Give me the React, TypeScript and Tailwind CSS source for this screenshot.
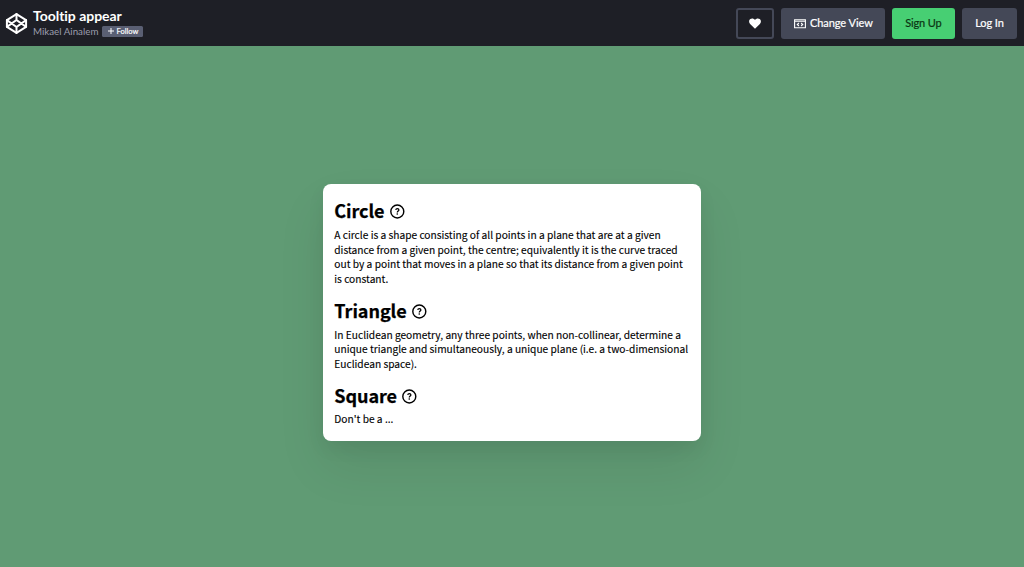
import type { ReactNode } from "react";

function Logo() {
  return (
    <svg className="h-[23px] w-[23px] shrink-0" viewBox="0 0 24 24" fill="none" stroke="#fff" strokeWidth="2.1" strokeLinejoin="round" strokeLinecap="round">
      <path d="M12 2.2 22 8.5v7L12 21.8 2 15.5v-7Z" />
      <path d="M12 2.2v6.2M12 15.6v6.2M2 8.5l10 7.1 10-7.1M2 15.5l10-7.1 10 7.1" />
    </svg>
  );
}

function HelpIcon() {
  return (
    <svg className="mt-[2.5px] h-[15px] w-[15px]" viewBox="0 0 15 15" fill="none" stroke="#000">
      <circle cx="7.3" cy="7.5" r="6.5" strokeWidth="1.4" />
      <path d="M5.7 5.9C5.9 5 6.5 4.6 7.3 4.6c1 0 1.6.5 1.6 1.3 0 1.1-1.6 1.2-1.6 2.5" strokeWidth="1.3" />
      <circle cx="7.25" cy="10" r=".8" fill="#000" stroke="none" />
    </svg>
  );
}

function Section({ title, children }: { title: string; children: ReactNode }) {
  return (
    <section>
      <h2 className="flex h-[29px] items-center gap-[5px] text-[18px] leading-[29px] font-bold tracking-[-0.05px] [-webkit-text-stroke:0.25px_#000]">
        {title}
        <HelpIcon />
      </h2>
      <p className="mt-[2.9px] text-[10.2px] leading-[14.6px] whitespace-nowrap [-webkit-text-stroke:0.12px_#000]">{children}</p>
    </section>
  );
}

export default function App() {
  return (
    <div className="flex h-screen flex-col overflow-hidden bg-[#609b74] font-['Lato',sans-serif]">
      <header className="flex h-[46px] shrink-0 items-center justify-between bg-[#1e1f26] pr-[7px] pl-[5px] text-white">
        <div className="flex items-center gap-[5px]">
          <Logo />
          <div className="-mt-px">
            <h1 className="text-[14px] leading-[16px] font-bold tracking-[-0.03px]">Tooltip appear</h1>
            <div className="flex h-[14px] items-center gap-[4px]">
              <span className="text-[9.75px] leading-[14px] text-[#9b9dad]">Mikael Ainalem</span>
              <button className="mt-px flex h-[11px] w-[41px] items-center justify-center gap-[3px] rounded-[1.5px] bg-[#5a5f73] text-[7.5px] leading-[11px] [-webkit-text-stroke:0.15px_#fff]">
                <svg className="h-[6px] w-[6px]" viewBox="0 0 6 6" stroke="#fff" strokeWidth="1"><path d="M3 0v6M0 3h6" /></svg>
                Follow
              </button>
            </div>
          </div>
        </div>
        <div className="flex gap-[7.2px] text-[11px] [-webkit-text-stroke:0.2px_currentColor]">
          <button aria-label="Love" className="flex h-[31px] w-[38px] items-center justify-center rounded-[3px] border-2 border-[#444857]">
            <svg className="h-[11px] w-[12px]" viewBox="0 0 12 11" fill="#fff"><path d="M6 10.7 1.1 5.9C-.4 4.3-.1 2 1.3 1 2.8-.1 4.9.3 6 1.9 7.1.3 9.2-.1 10.7 1c1.4 1 1.7 3.3.2 4.9Z" /></svg>
          </button>
          <button className="flex h-[31px] w-[104px] items-center justify-center gap-[4px] rounded-[3px] bg-[#444857] pl-[0.8px]">
            <svg className="mt-px h-[10px] w-[12px]" viewBox="0 0 12 10" fill="none" stroke="#fff" strokeWidth="1.1">
              <path d="M.6 .8h10.8v8H.6ZM.6 2.2h10.8M4.9 4 3.3 5.5 4.9 7M7.1 4l1.6 1.5L7.1 7" />
            </svg>
            <span className="tracking-[-0.05px]">Change View</span>
          </button>
          <button className="h-[31px] w-[62.5px] rounded-[3px] bg-[#47cf73] tracking-[-0.15px] text-[#0b3412]">Sign Up</button>
          <button className="h-[31px] w-[55.2px] rounded-[3px] bg-[#444857] tracking-[-0.1px]">Log In</button>
        </div>
      </header>
      <main className="flex flex-1 justify-center pt-[137.5px]">
        <article className="flex h-[257px] w-[378px] flex-col gap-[9.2px] rounded-[8px] bg-white px-[11.3px] pt-[12.7px] font-['Noto_Sans_CJK_SC',sans-serif] text-black shadow-[0_25px_50px_rgba(0,0,0,0.08),0_8px_18px_rgba(0,0,0,0.06)]">
          <Section title="Circle">
            A circle is a shape consisting of all points in a plane that are at a given<br />
            distance from a given point, the centre; equivalently it is the curve traced<br />
            out by a point that moves in a plane so that its distance from a given point<br />
            is constant.
          </Section>
          <Section title="Triangle">
            In Euclidean geometry, any three points, when non-collinear, determine a<br />
            unique triangle and simultaneously, a unique plane (i.e. a two-dimensional<br />
            Euclidean space).
          </Section>
          <Section title="Square">Don't be a ...</Section>
        </article>
      </main>
    </div>
  );
}
